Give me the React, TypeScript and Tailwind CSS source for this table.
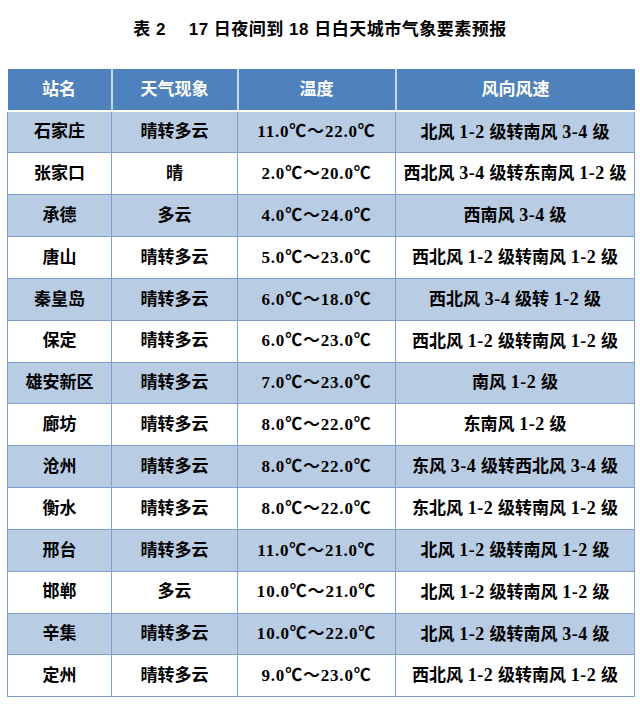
import React from "react";

const rows: [string, string, string, string][] = [
  ["石家庄", "晴转多云", "11.0℃～22.0℃", "北风 1-2 级转南风 3-4 级"],
  ["张家口", "晴", "2.0℃～20.0℃", "西北风 3-4 级转东南风 1-2 级"],
  ["承德", "多云", "4.0℃～24.0℃", "西南风 3-4 级"],
  ["唐山", "晴转多云", "5.0℃～23.0℃", "西北风 1-2 级转南风 1-2 级"],
  ["秦皇岛", "晴转多云", "6.0℃～18.0℃", "西北风 3-4 级转 1-2 级"],
  ["保定", "晴转多云", "6.0℃～23.0℃", "西北风 1-2 级转南风 1-2 级"],
  ["雄安新区", "晴转多云", "7.0℃～23.0℃", "南风 1-2 级"],
  ["廊坊", "晴转多云", "8.0℃～22.0℃", "东南风 1-2 级"],
  ["沧州", "晴转多云", "8.0℃～22.0℃", "东风 3-4 级转西北风 3-4 级"],
  ["衡水", "晴转多云", "8.0℃～22.0℃", "东北风 1-2 级转南风 1-2 级"],
  ["邢台", "晴转多云", "11.0℃～21.0℃", "北风 1-2 级转南风 1-2 级"],
  ["邯郸", "多云", "10.0℃～21.0℃", "北风 1-2 级转南风 1-2 级"],
  ["辛集", "晴转多云", "10.0℃～22.0℃", "北风 1-2 级转南风 3-4 级"],
  ["定州", "晴转多云", "9.0℃～23.0℃", "西北风 1-2 级转南风 1-2 级"],
];

function Wind({ text }: { text: string }) {
  const parts = text.split(/([0-9]+-[0-9]+)/);
  return (
    <>
      {parts.map((p, i) =>
        /^[0-9]+-[0-9]+$/.test(p) ? (
          <span key={i} className="font-['Liberation_Serif',serif] font-bold text-[18px] tracking-[0.5px]">
            {p}
          </span>
        ) : (
          <span key={i}>{p}</span>
        )
      )}
    </>
  );
}

export default function App() {
  return (
    <div className="w-[640px] h-[704px] bg-white overflow-hidden font-['Liberation_Sans','Noto_Sans_CJK_SC',sans-serif] text-black">
      <div className="pt-[20px] h-[69px] text-center text-[17px] leading-[20px] font-bold tracking-[0.5px] whitespace-pre">
        表 2　 17 日夜间到 18 日白天城市气象要素预报
      </div>
      <table className="ml-[7px] w-[627px] table-fixed border-collapse text-[17px]">
        <colgroup>
          <col className="w-[104px]" />
          <col className="w-[126px]" />
          <col className="w-[158px]" />
          <col className="w-[239px]" />
        </colgroup>
        <thead>
          <tr className="h-[42px]">
            {["站名", "天气现象", "温度", "风向风速"].map((h, i) => (
              <th
                key={h}
                className={
                  i === 0
                    ? "bg-[#4f81bd] text-white font-bold border-b-2 border-b-white p-0"
                    : "bg-[#4f81bd] text-white font-bold border-b-2 border-b-white border-l-2 border-l-[#c6d5ea] p-0"
                }
              >
                {h}
              </th>
            ))}
          </tr>
        </thead>
        <tbody>
          {rows.map((r, idx) => (
            <tr
              key={r[0]}
              className={
                idx % 2 === 0 ? "h-[41.85px] bg-[#b8cce4]" : "h-[41.85px] bg-white"
              }
            >
              <td className="border border-[#7d9fd1] text-center font-bold p-0">{r[0]}</td>
              <td className="border border-[#7d9fd1] text-center font-bold p-0">{r[1]}</td>
              <td className="border border-[#7d9fd1] text-center p-0 font-['Liberation_Serif','Noto_Sans_CJK_SC',serif] font-bold tracking-[0.8px]">
                {r[2]}
              </td>
              <td className="border border-[#7d9fd1] text-center font-bold p-0">
                <Wind text={r[3]} />
              </td>
            </tr>
          ))}
        </tbody>
      </table>
    </div>
  );
}
